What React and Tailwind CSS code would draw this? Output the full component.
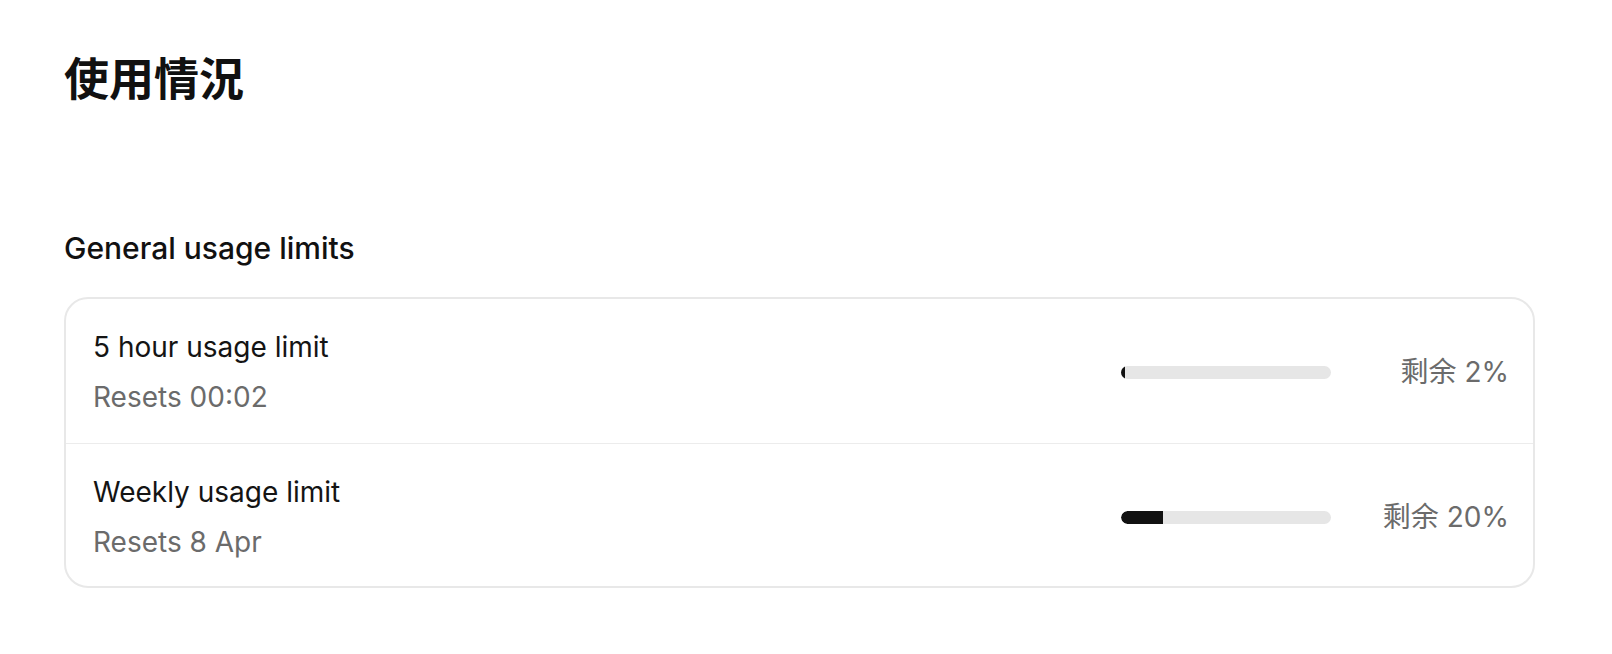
import React from 'react';

const limits = [
  { name: '5 hour usage limit', resets: 'Resets 00:02', used: 2 },
  { name: 'Weekly usage limit', resets: 'Resets 8 Apr', used: 20 },
];

const UsageRow = ({ limit, last }) => (
  <div className={`flex items-center justify-between pl-[27px] pr-[24px] pt-[28px] ${last ? 'pb-[24px]' : 'pb-[26px] border-b border-[#ececec]'}`}>
    <div className="flex flex-col gap-[10px]">
      <span className="text-[28px] leading-[40px] text-[#141414]">{limit.name}</span>
      <span className="text-[28px] leading-[40px] text-[#6b6b6b]">{limit.resets}</span>
    </div>
    <div className="flex items-center gap-[36px]">
      <div className="w-[210px] h-[13px] rounded-full bg-[#e6e6e6] overflow-hidden">
        <div className="h-full bg-[#111111] rounded-l-full" style={{ width: `${limit.used}%` }} />
      </div>
      <span className="w-[142px] text-right text-[28px] leading-[40px] text-[#6b6b6b]">剩余 {limit.used}%</span>
    </div>
  </div>
);

const App = () => {
  return (
    <div
      className="min-h-[654px] bg-white pl-[64px] pr-[77px] pt-[48px]"
      style={{ fontFamily: 'Inter, "Noto Sans CJK SC", sans-serif' }}
    >
      <h1 className="text-[45px] leading-[64px] font-bold text-[#111111]">使用情況</h1>

      <h2 className="mt-[116px] text-[30px] leading-[40px] font-medium text-[#111111]">General usage limits</h2>

      <div className="mt-[29px] rounded-[24px] border-2 border-[#e8e8e8] bg-white">
        {limits.map((limit, i) => (
          <UsageRow key={limit.name} limit={limit} last={i === limits.length - 1} />
        ))}
      </div>
    </div>
  );
};

export default App;
